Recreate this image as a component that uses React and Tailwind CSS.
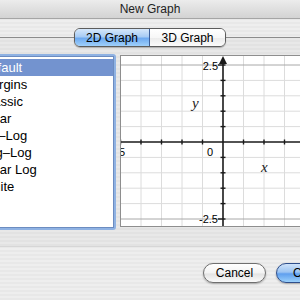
import { useState } from "react";

const styles = ["Default", "Margins", "Classic", "Polar", "Lin–Log", "Log–Log", "Polar Log", "White"];

const GraphPreview = () => {
    const xs = [-0.5, 20, 40.5, 61, 81.5, 122.5, 143, 163.5, 184];
    const ys = [9, 24.4, 39.8, 55.2, 70.6, 101.4, 116.8, 132.2, 147.6, 163];
    return (
        <svg width="200" height="170" className="block">
            {/* grid */}
            {xs.map((x) => (
                <line key={"v" + x} x1={x} y1="0" x2={x} y2="170" stroke="#dcdcdc" strokeWidth="1" />
            ))}
            {ys.map((y) => (
                <line key={"h" + y} x1="0" y1={y} x2="200" y2={y} stroke={y === 9 || y === 163 ? "#a8a8a8" : "#dcdcdc"} strokeWidth="1" />
            ))}
            {/* axes */}
            <line x1="0" y1="86" x2="200" y2="86" stroke="#1a1a1a" strokeWidth="1.6" />
            <line x1="102" y1="4" x2="102" y2="170" stroke="#1a1a1a" strokeWidth="1.6" />
            <polygon points="102,0 98,8 106,8" fill="#1a1a1a" />
            {xs.map((x) => (
                <line key={"tx" + x} x1={x} y1="83.5" x2={x} y2="88.5" stroke="#1a1a1a" strokeWidth="1.4" />
            ))}
            {ys.map((y) => (
                <line key={"ty" + y} x1={y === 9 || y === 163 ? 97 : 99.5} y1={y} x2="104.5" y2={y} stroke="#1a1a1a" strokeWidth="1.4" />
            ))}
            {/* labels */}
            <g fontFamily="Liberation Sans, sans-serif" fontSize="11" fill="#000">
                <text x="97" y="14" textAnchor="end">2.5</text>
                <text x="97" y="167" textAnchor="end">-2.5</text>
                <text x="92" y="100" textAnchor="end">0</text>
                <text x="4" y="100" textAnchor="end">-5</text>
            </g>
            <g fontFamily="Liberation Serif, serif" fontSize="15" fontStyle="italic" fill="#222">
                <text x="71" y="52">y</text>
                <text x="140" y="116">x</text>
            </g>
        </svg>
    );
};

const App = () => {
    const [tab, setTab] = useState("2d");
    const [selected, setSelected] = useState(0);

    return (
        <div className="w-[300px] h-[300px] overflow-hidden flex flex-col font-['Liberation_Sans',sans-serif] text-black bg-[repeating-linear-gradient(to_bottom,#eeeeee_0px,#eeeeee_2px,#e8e8e8_2px,#e8e8e8_4px)]">
            {/* title bar */}
            <div className="h-[19px] shrink-0 flex items-center justify-center text-[12px] text-[#222] bg-[linear-gradient(to_bottom,#ececec,#d3d3d3)] border-b border-[#a5a5a5]">
                New Graph
            </div>

            {/* segmented control */}
            <div className="mt-[9px] flex justify-center relative z-10 -mb-[10px]">
                <div className="flex h-[19px] rounded-[6px] border border-[#5c5c5c] overflow-hidden shadow-[0_1px_1px_rgba(0,0,0,0.25)] text-[12px]">
                    <button
                        onClick={() => setTab("2d")}
                        className={
                            tab === "2d"
                                ? "w-[75px] flex items-center justify-center bg-[linear-gradient(to_bottom,#d6e8fb_0%,#a8ccf4_45%,#6eaaf0_55%,#9fd0fb_100%)] border-r border-[#3c5f9a]"
                                : "w-[75px] flex items-center justify-center bg-[linear-gradient(to_bottom,#ffffff_0%,#f4f4f4_50%,#e6e6e6_55%,#fafafa_100%)] border-r border-[#8a8a8a]"
                        }
                    >
                        2D Graph
                    </button>
                    <button
                        onClick={() => setTab("3d")}
                        className={
                            tab === "3d"
                                ? "w-[75px] flex items-center justify-center bg-[linear-gradient(to_bottom,#d6e8fb_0%,#a8ccf4_45%,#6eaaf0_55%,#9fd0fb_100%)]"
                                : "w-[75px] flex items-center justify-center bg-[linear-gradient(to_bottom,#ffffff_0%,#f7f7f7_50%,#ececec_55%,#fbfbfb_100%)]"
                        }
                    >
                        3D Graph
                    </button>
                </div>
            </div>

            {/* tab box */}
            <div className="h-[210px] shrink-0 border-t border-[#8c8c8c] bg-[repeating-linear-gradient(to_bottom,#e8e8e8_0px,#e8e8e8_2px,#e2e2e2_2px,#e2e2e2_4px)] border-b border-b-[#d6d6d6]">
                <div className="mt-[17px] flex items-start gap-[4px]">
                    {/* style list */}
                    <div className="-ml-[24px] w-[140px] h-[176px] -mt-px shrink-0 p-[2px] rounded-[3px] bg-[#8fb2e3]">
                        <div className="h-full bg-white border border-[#6c8cc0] pt-[2px]">
                            {styles.map((s, i) => (
                                <div
                                    key={s}
                                    onClick={() => setSelected(i)}
                                    className={
                                        i === selected
                                            ? "h-[17px] pl-[2px] text-[13px] leading-[17px] text-white bg-[#7393cf]"
                                            : "h-[17px] pl-[2px] text-[13px] leading-[17px] text-black"
                                    }
                                >
                                    {s}
                                </div>
                            ))}
                        </div>
                    </div>

                    {/* preview */}
                    <div className="w-[200px] h-[172px] shrink-0 bg-white border border-[#8e8e8e] overflow-hidden">
                        <GraphPreview />
                    </div>
                </div>
            </div>

            {/* buttons */}
            <div className="mt-[16px] flex gap-[10px] pl-[203px]">
                <button className="w-[63px] h-[20px] shrink-0 rounded-full border border-[#6f6f6f] text-[12px] bg-[linear-gradient(to_bottom,#ffffff_0%,#f3f3f3_50%,#e3e3e3_55%,#fafafa_100%)] shadow-[0_1px_2px_rgba(0,0,0,0.3)]">
                    Cancel
                </button>
                <button className="w-[63px] h-[20px] shrink-0 rounded-full border border-[#2f4f8c] text-[12px] text-left pl-[16px] bg-[linear-gradient(to_bottom,#cfe3fa_0%,#9cc4f2_45%,#5f9fee_55%,#9ad0fb_100%)] shadow-[0_1px_2px_rgba(0,0,0,0.3)]">
                    OK
                </button>
            </div>
        </div>
    );
};

export default App;
